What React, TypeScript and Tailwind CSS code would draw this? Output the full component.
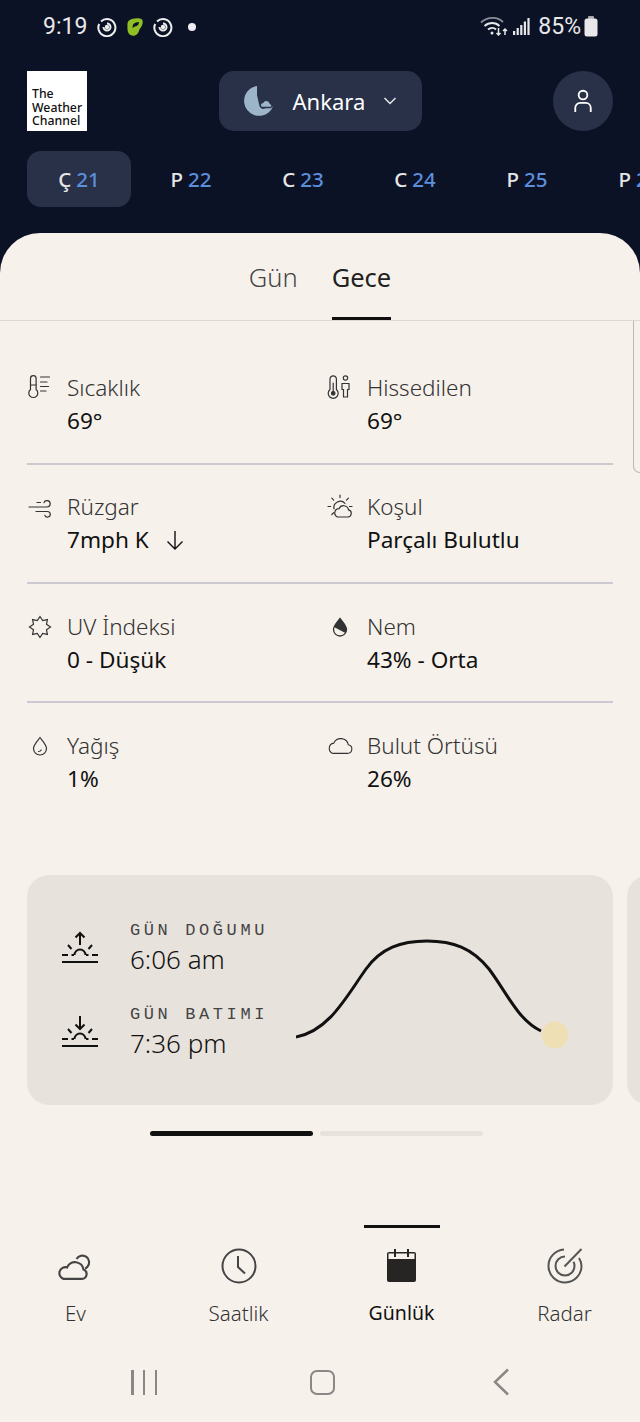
const DAYS = [
  { letter: 'Ç', day: '21' },
  { letter: 'P', day: '22' },
  { letter: 'C', day: '23' },
  { letter: 'C', day: '24' },
  { letter: 'P', day: '25' },
  { letter: 'P', day: '26' },
]

function Thermometer() {
  return (
    <svg width="26" height="26" viewBox="0 0 26 26" fill="none" stroke="#333" strokeWidth="1.2" strokeLinecap="round">
      <path d="M3.500 3.500a2.800 2.800 0 0 1 5.600 0v11a4.500 4.500 0 1 1-5.600 0z" />
      <path d="M3.500 10h5.600" />
      <path d="M13.500 2h9M13.500 7h6.500M13.500 11.500h8M13.500 16h5.500" />
    </svg>
  )
}

function FeelsLike() {
  return (
    <svg width="26" height="26" viewBox="0 0 26 26" fill="none" stroke="#333" strokeWidth="1.2" strokeLinecap="round">
      <path d="M3 4a3.200 3.200 0 0 1 6.400 0v10.500a5 5 0 1 1-6.400 0z" />
      <circle cx="6.200" cy="18.300" r="1.800" fill="#333" />
      <path d="M6.200 8v9" />
      <circle cx="18.500" cy="3" r="2.200" />
      <path d="M15 8.500h7v6h-1.500V22h-4v-7.500H15z" />
    </svg>
  )
}

function Wind() {
  return (
    <svg width="26" height="26" viewBox="0 0 26 26" fill="none" stroke="#333" strokeWidth="1.2" strokeLinecap="round">
      <path d="M2 13h18a3.200 3.200 0 1 0-3-4.400" />
      <path d="M10 8.500h3.500" />
      <path d="M9 17.500h11.500a2.800 2.800 0 1 1-2.600 3.900" />
    </svg>
  )
}

function SunCloud() {
  return (
    <svg width="26" height="26" viewBox="0 0 26 26" fill="none" stroke="#333" strokeWidth="1.2" strokeLinecap="round">
      <path d="M13 1v2.600M4.800 4.200l1.900 1.900M21.400 4.200l-1.900 1.900M1 12.500h2.600M22.500 12.500H25M4.800 20.500l1.900-1.900" />
      <path d="M7 15a6.400 6.400 0 0 1 11-5.600" />
      <path d="M10.500 23h10.300a3.600 3.600 0 0 0 .7-7.100 5 5 0 0 0-9.500-1.200 4.300 4.300 0 0 0-1.500 8.300z" />
    </svg>
  )
}

function UvStar() {
  return (
    <svg width="26" height="26" viewBox="0 0 26 26" fill="none" stroke="#333" strokeWidth="1.200" strokeLinejoin="miter">
      <polygon points="13,2.500 15.700,6.500 20.400,5.600 19.500,10.300 23.500,13 19.500,15.700 20.400,20.400 15.700,19.500 13,23.500 10.300,19.500 5.600,20.400 6.500,15.700 2.500,13 6.500,10.300 5.600,5.600 10.300,6.500" />
    </svg>
  )
}

function HalfDrop() {
  return (
    <svg width="26" height="26" viewBox="0 0 26 26" fill="none">
      <path d="M13 4.500c3 3.700 6.500 7.300 6.500 11a6.500 6.500 0 0 1-13 0c0-3.700 3.500-7.300 6.500-11z" stroke="#333" strokeWidth="1.300" />
      <path d="M13 4.500c3 3.700 6.500 7.300 6.500 11 0 1.300-.4 2.600-1.100 3.600L7 13c1.300-2.900 3.800-5.700 6-8.500z" fill="#333" />
    </svg>
  )
}

function Drop() {
  return (
    <svg width="26" height="26" viewBox="0 0 26 26" fill="none" stroke="#333" strokeWidth="1.200" strokeLinecap="round">
      <path d="M13 4.500c2.800 3.700 6.500 7.300 6.500 11a6.500 6.500 0 0 1-13 0c0-3.700 3.700-7.300 6.500-11z" />
      <path d="M11.500 18.500c1.300 0 2.200-.5 2.700-1.500" />
    </svg>
  )
}

function CloudIcon() {
  return (
    <svg width="28" height="26" viewBox="0 0 28 26" fill="none" stroke="#333" strokeWidth="1.200">
      <path d="M6.500 21h15.500a4.700 4.700 0 0 0 1-9.300 8.300 8.300 0 0 0-15.700-1.800A5.700 5.700 0 0 0 6.500 21z" />
    </svg>
  )
}

function SunEvent({ up }: { up: boolean }) {
  return (
    <svg width="36" height="36" viewBox="0 0 36 36" fill="none" stroke="#111" strokeWidth="2">
      {up ? <path d="M18 15V3M13.500 7.500L18 3l4.500 4.500" /> : <path d="M18 2v13M13.500 10.500L18 15l4.500-4.500" />}
      <path d="M6 15l3.500 4M30 15l-3.500 4" />
      <path d="M12.500 25a5.500 5.500 0 0 1 11 0" />
      <path d="M0 25h6M9.500 25h2.500M24 25h2.500M30 25h6" />
      <path d="M0 32h36" />
    </svg>
  )
}

function Stat({ icon, label, value, arrow }: { icon: React.ReactNode; label: string; value: string; arrow?: boolean }) {
  return (
    <div className="flex min-w-0">
      <div className="flex h-[26px] w-[26px] shrink-0 items-center justify-center">{icon}</div>
      <div className="ml-[14px] min-w-0">
        <div className="text-[22.500px] font-light leading-[26px] text-[#333]">{label}</div>
        <div className="mt-[7px] flex items-center text-[22.600px] leading-[26px] text-[#111]">
          {value}
          {arrow && (
            <svg className="ml-[16px]" width="20" height="22" viewBox="0 0 20 22" fill="none" stroke="#111" strokeWidth="1.400">
              <path d="M10 2v18M2.500 12.500L10 20l7.500-7.500" />
            </svg>
          )}
        </div>
      </div>
    </div>
  )
}

function NavItem({ label, active, children }: { label: string; active?: boolean; children: React.ReactNode }) {
  return (
    <div className="relative flex w-[163px] shrink-0 flex-col items-center">
      {active && <div className="absolute top-[-23px] h-[3px] w-[76px] bg-[#111]" />}
      <div className="flex h-[36px] items-center justify-center">{children}</div>
      <div className={`mt-[17px] leading-[24px] ${active ? 'text-[19.500px] text-[#111]' : 'text-[20.500px] font-light text-[#333]'}`}>{label}</div>
    </div>
  )
}

export default function App() {
  return (
    <div className="flex h-[1422px] w-[640px] flex-col overflow-hidden bg-[#0b1226] font-['Noto_Sans',sans-serif]">
      {/* status bar */}
      <div className="flex h-[54px] shrink-0 items-center justify-between pb-[1px] pl-[43px] pr-[42px] font-['Roboto',sans-serif] text-[#e8e8ea]">
        <div className="flex items-center">
          <span className="text-[23px] leading-none">9:19</span>
          <svg className="ml-[10px]" width="20" height="20" viewBox="0 0 20 20" fill="none" stroke="#eee" strokeWidth="2">
            <path d="M4 4.500a8.500 8.500 0 1 1-1.800 2.500" />
            <path d="M6.500 10a3.500 3.500 0 1 0 3.500-3.500" />
            <circle cx="10" cy="10" r="1.200" fill="#eee" />
          </svg>
          <svg className="ml-[9px]" width="18" height="20" viewBox="0 0 18 20" fill="none">
            <path d="M3 3.500C6 1 13 .5 15.500 2c2 1.500 1.500 6-1 9-1.800 2-1.500 6-5.500 7.500C5 19.500 1.500 17 1.500 12S1 5.500 3 3.500z" fill="#8fbf25" />
            <path d="M6.500 11c0-3 1-5 3.500-5.500l3-.5c0 3-2 4-4 4.500-1 .3-1.500 1-2.500 1.500z" fill="#0b1226" />
          </svg>
          <svg className="ml-[9px]" width="20" height="20" viewBox="0 0 20 20" fill="none" stroke="#eee" strokeWidth="2">
            <path d="M4 4.500a8.500 8.500 0 1 1-1.800 2.500" />
            <path d="M6.500 10a3.500 3.500 0 1 0 3.500-3.500" />
            <circle cx="10" cy="10" r="1.200" fill="#eee" />
          </svg>
          <span className="ml-[15px] h-2 w-2 rounded-full bg-[#eee]" />
        </div>
        <div className="flex items-center">
          <svg width="28" height="22" viewBox="0 0 28 22" fill="none" stroke="#e8e8ea" strokeWidth="1.800">
            <path d="M1 6.500C7.500.5 17.500.5 23 6" stroke="#8a8d98" />
            <path d="M4.500 10c4.500-4 11-4 15 0M8 13.500c2.500-2 6-2 8 0" />
            <circle cx="12" cy="17" r="1.500" fill="#e8e8ea" stroke="none" />
            <path d="M18.500 12v7M16.500 17l2 2 2-2" strokeWidth="1.500" />
            <path d="M25 19v-6M23 15l2-2 2 2" strokeWidth="1.500" />
          </svg>
          <svg className="ml-[5px]" width="17" height="19" viewBox="0 0 17 19" fill="#e8e8ea">
            <rect x="0" y="14" width="2.200" height="4" />
            <rect x="3.600" y="11" width="2.200" height="7" />
            <rect x="7.200" y="8" width="2.200" height="10" />
            <rect x="10.800" y="4.500" width="2.200" height="13.500" />
            <rect x="14.400" y="1" width="2.200" height="17" />
          </svg>
          <span className="ml-[8px] text-[23px] leading-none">85%</span>
          <svg className="ml-[3px]" width="14" height="21" viewBox="0 0 14 21" fill="#e8e8ea">
            <rect x="4" y="0" width="6" height="3" rx="1" fill="#a8a9ae" />
            <rect x="0.500" y="2.500" width="13" height="18" rx="2.500" />
          </svg>
        </div>
      </div>

      {/* header */}
      <div className="mt-[17px] flex h-[60px] shrink-0 items-center justify-between px-[27px]">
        <div className="flex h-[60px] w-[60px] items-center bg-white pl-[5px] pt-[13px] text-[12.300px] font-medium leading-[13.500px] text-[#111]">
          <div>
            The
            <br />
            Weather
            <br />
            Channel
          </div>
        </div>
        <div className="flex h-[60px] w-[203px] items-center rounded-[15px] bg-[#283147] pl-[24px]">
          <svg width="32" height="32" viewBox="0 0 32 32">
            <path d="M14 1A15 15 0 1 0 30 21.500L19 24l-3-5-2-9z" fill="#9db5c8" />
            <path d="M19 22.500a2.500 2.500 0 0 1 .5-4.900 4.200 4.200 0 0 1 7.800.8 2.100 2.100 0 0 1 .2 4.100z" fill="#9db5c8" stroke="#283147" strokeWidth="1.500" />
          </svg>
          <span className="ml-[18px] text-[22px] leading-none text-white">Ankara</span>
          <svg className="ml-[18px]" width="14" height="10" viewBox="0 0 14 10" fill="none" stroke="#e8e8ea" strokeWidth="1.500">
            <path d="M1.500 2L7 7.500 12.500 2" />
          </svg>
        </div>
        <div className="flex h-[60px] w-[60px] items-center justify-center rounded-full bg-[#283147]">
          <svg width="20" height="26" viewBox="0 0 22 26" fill="none" stroke="#fff" strokeWidth="2">
            <circle cx="11" cy="6.500" r="4.800" />
            <path d="M2.500 25v-4.500a5.500 5.500 0 0 1 5.500-5.500h6a5.500 5.500 0 0 1 5.500 5.500V25" />
          </svg>
        </div>
      </div>

      {/* days */}
      <div className="mt-[20px] flex h-[56px] shrink-0 gap-[8px] pl-[27px]">
        {DAYS.map((d, i) => (
          <div
            key={d.day}
            className={`flex h-[56px] w-[104px] shrink-0 items-center justify-center rounded-[14px] text-[20.500px] font-medium ${i === 0 ? 'bg-[#283147]' : ''}`}
          >
            <span className="text-[#e6e6e6]">{d.letter}</span>
            <span className="ml-[5px] text-[#5b8fdc]">{d.day}</span>
          </div>
        ))}
      </div>

      {/* sheet */}
      <div className="relative mt-[26px] flex min-h-0 flex-1 flex-col rounded-t-[40px] bg-[#f7f1eb]">
        <div className="flex h-[88px] shrink-0 justify-center gap-[34px] border-b border-[#dcd8d3]">
          <div className="pt-[27px] text-[25.500px] font-light leading-[34px] text-[#444]">Gün</div>
          <div className="h-[87px] border-b-[3px] border-[#111] pt-[27px] text-[25.500px] leading-[34px] text-[#222]">Gece</div>
        </div>
        <div className="absolute right-0 top-[88px] h-[152px] w-[7px] rounded-bl-[8px] border-b border-l border-[#bcb8b3]" />

        <div className="px-[27px] pt-[54px]">
          <div className="grid grid-cols-[300px_1fr] border-b-2 border-[#cdc9d3] pb-[29px]">
            <Stat icon={<Thermometer />} label="Sıcaklık" value="69°" />
            <Stat icon={<FeelsLike />} label="Hissedilen" value="69°" />
          </div>
          <div className="grid grid-cols-[300px_1fr] border-b-2 border-[#cdc9d3] pb-[29px] pt-[29px]">
            <Stat icon={<Wind />} label="Rüzgar" value="7mph K" arrow />
            <Stat icon={<SunCloud />} label="Koşul" value="Parçalı Bulutlu" />
          </div>
          <div className="grid grid-cols-[300px_1fr] border-b-2 border-[#cdc9d3] pb-[28px] pt-[30px]">
            <Stat icon={<UvStar />} label="UV İndeksi" value="0 - Düşük" />
            <Stat icon={<HalfDrop />} label="Nem" value="43% - Orta" />
          </div>
          <div className="grid grid-cols-[300px_1fr] pt-[30px]">
            <Stat icon={<Drop />} label="Yağış" value="1%" />
            <Stat icon={<CloudIcon />} label="Bulut Örtüsü" value="26%" />
          </div>
        </div>

        {/* sun card */}
        <div className="mt-[83px] flex shrink-0 gap-[14px] pl-[27px]">
          <div className="flex h-[230px] w-[586px] shrink-0 items-center rounded-[22px] bg-[#e8e2dc] pl-[35px]">
            <div className="w-[234px]">
              <div className="flex items-center">
                <SunEvent up />
                <div className="ml-[32px]">
                  <div className="font-['Liberation_Mono',monospace] text-[17px] leading-[20px] tracking-[3.600px] text-[#444]">GÜN DOĞUMU</div>
                  <div className="mt-[1px] text-[26px] font-light leading-[34px] text-[#111]">6:06 am</div>
                </div>
              </div>
              <div className="mt-[29px] flex items-center">
                <SunEvent up={false} />
                <div className="ml-[32px]">
                  <div className="font-['Liberation_Mono',monospace] text-[17px] leading-[20px] tracking-[3.600px] text-[#444]">GÜN BATIMI</div>
                  <div className="mt-[1px] text-[26px] font-light leading-[34px] text-[#111]">7:36 pm</div>
                </div>
              </div>
            </div>
            <svg width="280" height="120" viewBox="0 0 280 120" fill="none">
              <path d="M0 107c33-6 50-40 70-68C85 18 105 11 131 11c26 0 45 7 62 28 18 24 29 51 52 62" stroke="#111" strokeWidth="3" />
              <circle cx="259" cy="105" r="13.500" fill="#eedfb4" />
            </svg>
          </div>
          <div className="h-[230px] w-[40px] shrink-0 rounded-l-[22px] bg-[#e8e2dc]" />
        </div>

        {/* pager */}
        <div className="mt-[26px] flex shrink-0 justify-center gap-[7px] pr-[8px]">
          <div className="h-[5px] w-[163px] rounded-full bg-[#111]" />
          <div className="h-[5px] w-[163px] rounded-full bg-[#e8e2dc]" />
        </div>

        {/* bottom nav */}
        <div className="mt-[112px] flex shrink-0 justify-center">
          <NavItem label="Ev">
            <svg width="36" height="30" viewBox="2 1 33 28" fill="none" stroke="#444" strokeWidth="2">
              <path d="M7 27h17a4.500 4.500 0 0 0 1.500-8.700 8 8 0 0 0-15.300-2A5.500 5.500 0 0 0 7 27z" />
              <path d="M19 8.500a6.300 6.300 0 1 1 10 7.500 6 6 0 0 1-2 1.500" />
            </svg>
          </NavItem>
          <NavItem label="Saatlik">
            <svg width="36" height="36" viewBox="0 0 36 36" fill="none" stroke="#444" strokeWidth="2">
              <circle cx="18" cy="18" r="16.500" />
              <path d="M17 8v11l7 6.500" />
            </svg>
          </NavItem>
          <NavItem label="Günlük" active>
            <svg width="32" height="34" viewBox="0 0 32 34" fill="none">
              <rect x="1" y="3" width="29" height="30" rx="2" fill="#272524" />
              <rect x="2.500" y="4.500" width="26" height="5.500" fill="#f7f1eb" />
              <path d="M9 0v8M22 0v8" stroke="#272524" strokeWidth="2" />
            </svg>
          </NavItem>
          <NavItem label="Radar">
            <svg width="36" height="36" viewBox="0 0 36 36" fill="none" stroke="#555" strokeWidth="2">
              <path d="M17 1.500A16.500 16.500 0 1 0 34.500 18 16 16 0 0 0 32 10" />
              <path d="M18 8.500a9.500 9.500 0 1 0 9.500 9.500 9.500 9.500 0 0 0-1-4.300" />
              <path d="M17.500 18.500L34.500 1" />
            </svg>
          </NavItem>
        </div>

        {/* system nav */}
        <div className="mt-[43px] flex shrink-0 items-center pl-[131px]">
          <div className="flex w-[26px] justify-between">
            <span className="h-[25px] w-[2.500px] bg-[#8a8886]" />
            <span className="h-[25px] w-[2.500px] bg-[#8a8886]" />
            <span className="h-[25px] w-[2.500px] bg-[#8a8886]" />
          </div>
          <div className="ml-[153px] h-[25px] w-[25px] rounded-[7px] border-[2.500px] border-[#8a8886]" />
          <svg className="ml-[157px]" width="18" height="28" viewBox="0 0 18 28" fill="none" stroke="#8a8886" strokeWidth="2.500">
            <path d="M16 1.500L3 14l13 12.500" />
          </svg>
        </div>
      </div>
    </div>
  )
}
